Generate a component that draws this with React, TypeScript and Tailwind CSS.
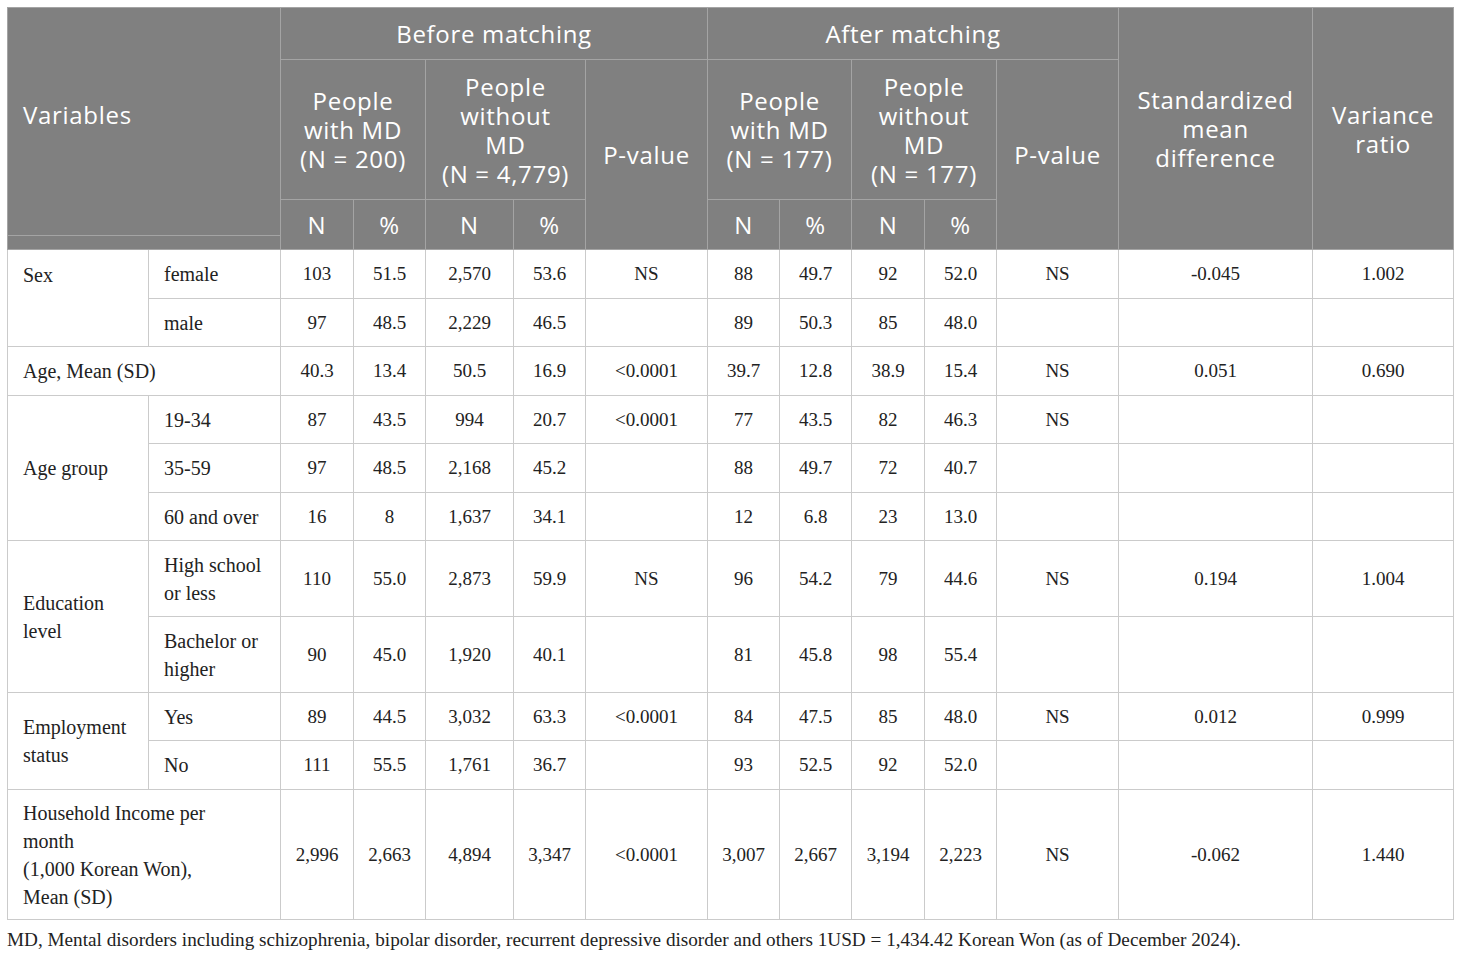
import React from 'react'

const colWidths = [141, 132, 73, 72, 88, 72, 122, 72, 72, 73, 72, 122, 194, 141]

type Row = {
  group?: React.ReactNode
  groupSpan?: number
  groupTop?: boolean
  label?: React.ReactNode
  full?: React.ReactNode
  h: number
  vals: string[]
}

const rows: Row[] = [
  { group: 'Sex', groupSpan: 2, groupTop: true, label: 'female', h: 49, vals: ['103', '51.5', '2,570', '53.6', 'NS', '88', '49.7', '92', '52.0', 'NS', '-0.045', '1.002'] },
  { label: 'male', h: 48, vals: ['97', '48.5', '2,229', '46.5', '', '89', '50.3', '85', '48.0', '', '', ''] },
  { full: 'Age, Mean (SD)', h: 49, vals: ['40.3', '13.4', '50.5', '16.9', '<0.0001', '39.7', '12.8', '38.9', '15.4', 'NS', '0.051', '0.690'] },
  { group: 'Age group', groupSpan: 3, label: '19-34', h: 48, vals: ['87', '43.5', '994', '20.7', '<0.0001', '77', '43.5', '82', '46.3', 'NS', '', ''] },
  { label: '35-59', h: 49, vals: ['97', '48.5', '2,168', '45.2', '', '88', '49.7', '72', '40.7', '', '', ''] },
  { label: '60 and over', h: 48, vals: ['16', '8', '1,637', '34.1', '', '12', '6.8', '23', '13.0', '', '', ''] },
  { group: <>Education<br />level</>, groupSpan: 2, label: <>High school<br />or less</>, h: 76, vals: ['110', '55.0', '2,873', '59.9', 'NS', '96', '54.2', '79', '44.6', 'NS', '0.194', '1.004'] },
  { label: <>Bachelor or<br />higher</>, h: 76, vals: ['90', '45.0', '1,920', '40.1', '', '81', '45.8', '98', '55.4', '', '', ''] },
  { group: <>Employment<br />status</>, groupSpan: 2, label: 'Yes', h: 48, vals: ['89', '44.5', '3,032', '63.3', '<0.0001', '84', '47.5', '85', '48.0', 'NS', '0.012', '0.999'] },
  { label: 'No', h: 49, vals: ['111', '55.5', '1,761', '36.7', '', '93', '52.5', '92', '52.0', '', '', ''] },
  { full: <>Household Income per<br />month<br />(1,000 Korean Won),<br />Mean (SD)</>, h: 130, vals: ['2,996', '2,663', '4,894', '3,347', '<0.0001', '3,007', '2,667', '3,194', '2,223', 'NS', '-0.062', '1.440'] },
]

const th = 'border border-[#a4a4a4] font-normal text-center align-middle p-0'
const td = 'border border-[#cbcbcb] align-middle p-0'

export default function App() {
  return (
    <div className="min-h-screen bg-white pl-[7px] pt-[7px]">
      <table className="table-fixed border-collapse w-[1446px] border border-[#cbcbcb]">
        <colgroup>
          {colWidths.map((w, i) => (
            <col key={i} style={{ width: w }} />
          ))}
        </colgroup>
        <thead className="bg-[#808080] text-white font-['Open_Sans',sans-serif] text-[24px] leading-[29px] tracking-[0.7px]">
          <tr className="h-[52px]">
            <th colSpan={2} rowSpan={3} className={`${th} text-left pl-[15px] pb-[14px]`}>Variables</th>
            <th colSpan={5} className={th}>Before matching</th>
            <th colSpan={5} className={th}>After matching</th>
            <th rowSpan={4} className={th}>Standardized<br />mean<br />difference</th>
            <th rowSpan={4} className={th}>Variance<br />ratio</th>
          </tr>
          <tr className="h-[140px]">
            <th colSpan={2} className={th}>People<br />with MD<br />(N = 200)</th>
            <th colSpan={2} className={th}>People<br />without<br />MD<br />(N = 4,779)</th>
            <th rowSpan={3} className={th}>P-value</th>
            <th colSpan={2} className={th}>People<br />with MD<br />(N = 177)</th>
            <th colSpan={2} className={th}>People<br />without<br />MD<br />(N = 177)</th>
            <th rowSpan={3} className={th}>P-value</th>
          </tr>
          <tr className="h-[36px]">
            {['N', '%', 'N', '%'].map((t, i) => (
              <th key={'b' + i} rowSpan={2} className={th}>{t}</th>
            ))}
            {['N', '%', 'N', '%'].map((t, i) => (
              <th key={'a' + i} rowSpan={2} className={th}>{t}</th>
            ))}
          </tr>
          <tr className="h-[14px]">
            <th colSpan={2} className={th}></th>
          </tr>
        </thead>
        <tbody className="font-['Liberation_Serif',serif] text-[19px] leading-[28px] text-[#222222]">
          {rows.map((r, i) => (
            <tr key={i} style={{ height: r.h }}>
              {r.full !== undefined ? (
                <td colSpan={2} className={`${td} pl-[15px] text-[20px]`}>{r.full}</td>
              ) : (
                <>
                  {r.group !== undefined && (
                    <td rowSpan={r.groupSpan} className={`${td} pl-[15px] text-[20px] ${r.groupTop ? 'align-top pt-[11px]' : ''}`}>{r.group}</td>
                  )}
                  <td className={`${td} pl-[15px] text-[20px]`}>{r.label}</td>
                </>
              )}
              {r.vals.map((v, j) => (
                <td key={j} className={`${td} text-center`}>{v}</td>
              ))}
            </tr>
          ))}
        </tbody>
      </table>
      <p className="mt-[8px] font-['Liberation_Serif',serif] text-[19.2px] leading-[24px] text-[#222222]">
        MD, Mental disorders including schizophrenia, bipolar disorder, recurrent depressive disorder and others 1USD = 1,434.42 Korean Won (as of December 2024).
      </p>
    </div>
  )
}
